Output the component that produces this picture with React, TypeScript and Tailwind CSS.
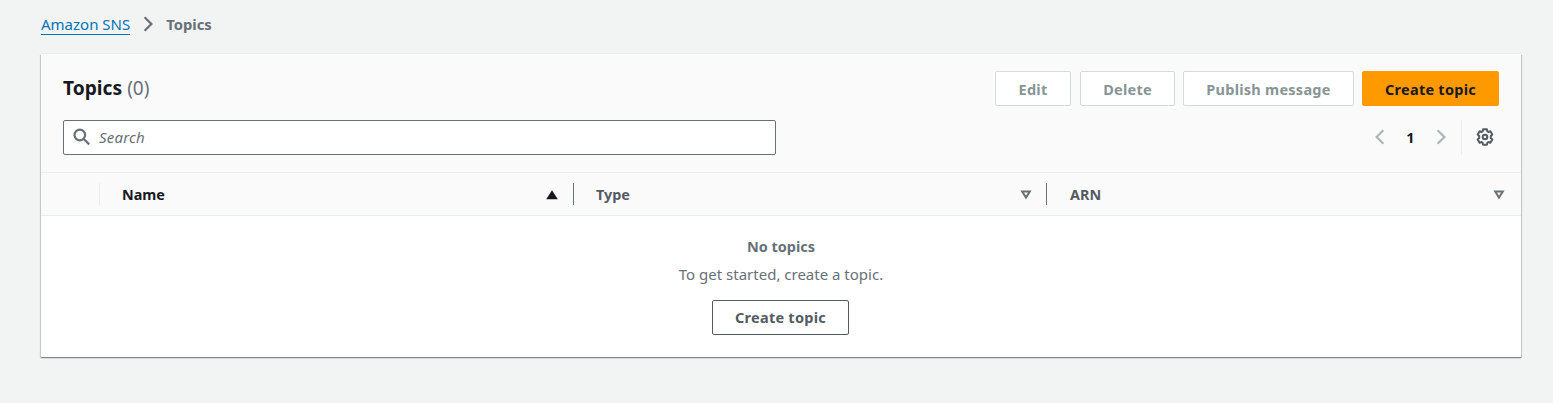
import type { ReactNode } from 'react';

function Button({ children, className }: { children: ReactNode; className: string }) {
  return (
    <button
      type="button"
      className={`flex h-[35px] items-center justify-center rounded-[2px] border text-[14.5px] leading-[22px] font-bold tracking-[0.25px] whitespace-nowrap ${className}`}
    >
      {children}
    </button>
  );
}

function Chevron({ left = false, className }: { left?: boolean; className: string }) {
  return (
    <svg width="18" height="18" viewBox="0 0 16 16" fill="none" stroke="currentColor" strokeWidth="2" className={className}>
      <path d={left ? 'M11 2 5 8l6 6' : 'm5 2 6 6-6 6'} />
    </svg>
  );
}

function Gear() {
  return (
    <svg width="18" height="18" viewBox="0 0 18 18" fill="none" stroke="currentColor" strokeWidth="2" strokeLinejoin="round">
      <path d="M7.1 1.3h3.8l.5 2.1 1 .6 2-.7 1.9 3.2-1.5 1.5v2l1.5 1.5-1.9 3.2-2-.7-1 .6-.5 2.1H7.1l-.5-2.1-1-.6-2 .7-1.9-3.2L3.2 10V8L1.7 6.5l1.9-3.2 2 .7 1-.6z" />
      <circle cx="9" cy="9" r="2.3" />
    </svg>
  );
}

function SortIcon({ active = false }: { active?: boolean }) {
  return active ? (
    <svg width="12" height="10" viewBox="0 0 12 10" fill="currentColor" className="text-[#16191f]">
      <path d="M6 0.3 11.8 9.3H0.2z" />
    </svg>
  ) : (
    <svg width="12" height="10" viewBox="0 0 12 10" fill="none" stroke="currentColor" strokeWidth="2" className="text-[#687078]">
      <path d="M2.2 1.5h7.6L6 7.6z" />
    </svg>
  );
}

export default function App() {
  return (
    <div className="h-[403px] bg-[#f2f3f3] pr-8 pl-[41px] font-['Noto_Sans',sans-serif] text-[15px] leading-[22px] text-[#687078]">
      <nav className="flex h-[54px] items-start pt-[13px]">
        <a href="#" className="mr-[9px] h-[22px] border-b border-[#0073bb] text-[#0073bb]">Amazon SNS</a>
        <Chevron className="mt-[2px] mr-[9px] text-[#687078]" />
        <span className="text-[14.8px] font-bold">Topics</span>
      </nav>

      <main className="h-[303px] w-[1480px] bg-white shadow-[0_1px_1px_0_rgba(0,28,36,0.3),1px_1px_1px_0_rgba(0,28,36,0.15),-1px_1px_1px_0_rgba(0,28,36,0.15)]">
        <header className="h-[119px] border-b border-[#eaeded] bg-[#fafafa] px-[22px] pt-[17px] shadow-[0_-1px_0_0_#eaeded]">
          <div className="flex justify-between">
            <h1 className="flex gap-[5px] pt-[4px] leading-[26px]">
              <span className="text-[19.2px] font-bold text-[#16191f]">Topics</span>
              <span className="text-[19px]">(0)</span>
            </h1>
            <div className="flex gap-2">
              <Button className="mr-px w-[76px] border-[#d5dbdb] bg-white text-[#879596]">Edit</Button>
              <Button className="w-[95px] border-[#d5dbdb] bg-white text-[#879596]">Delete</Button>
              <Button className="w-[171px] border-[#d5dbdb] bg-white text-[#879596]">Publish message</Button>
              <Button className="w-[137px] border-[#ff9900] bg-[#ff9900] text-[#16191f]">Create topic</Button>
            </div>
          </div>
          <div className="mt-[14px] flex items-center justify-between">
            <div className="flex h-[35px] w-[713px] items-center rounded-[2px] border border-[#687078] bg-white pb-px pl-[9px]">
              <svg width="18" height="18" viewBox="0 0 18 18" fill="none" stroke="currentColor" strokeWidth="2.2">
                <circle cx="6.8" cy="7" r="5.3" />
                <path d="m10.600 10.800 5.600 5.600" />
              </svg>
              <span className="ml-[8px] tracking-[0.2px] italic">Search</span>
            </div>
            <div className="flex h-[35px] items-center">
              <Chevron left className="mb-px text-[#aab7b8]" />
              <span className="mb-px w-[43px] text-center text-[14.5px] font-bold text-[#16191f]">1</span>
              <Chevron className="mb-px text-[#aab7b8]" />
              <div className="ml-[11px] flex h-[35px] items-center border-l border-[#eaeded] pr-[5px] pb-px pl-[14px] text-[#545b64]">
                <Gear />
              </div>
            </div>
          </div>
        </header>

        <div className="flex h-[43px] items-center border-b border-[#eaeded] bg-[#fafafa] text-[14.4px] font-bold text-[#545b64]">
          <div className="h-[22px] w-[59px] border-r border-[#eaeded]" />
          <div className="flex h-[22px] w-[474px] items-center justify-between border-r border-[#687078] pt-px pr-[15px] pl-[22px] text-[#16191f]">
            <span>Name</span>
            <SortIcon active />
          </div>
          <div className="flex h-[22px] w-[473px] items-center justify-between border-r border-[#687078] pt-px pr-[14px] pl-[22px]">
            <span>Type</span>
            <SortIcon />
          </div>
          <div className="flex h-[22px] flex-1 items-center justify-between pt-px pr-[16px] pl-[23px]">
            <span>ARN</span>
            <SortIcon />
          </div>
        </div>

        <div className="flex flex-col items-center pt-[19px]">
          <p className="text-[14.5px] font-bold">No topics</p>
          <p className="mt-[6px]">To get started, create a topic.</p>
          <Button className="mt-[15px] mr-px w-[137px] border-[#545b64] bg-white pb-[2px] text-[#545b64]">Create topic</Button>
        </div>
      </main>
    </div>
  );
}
